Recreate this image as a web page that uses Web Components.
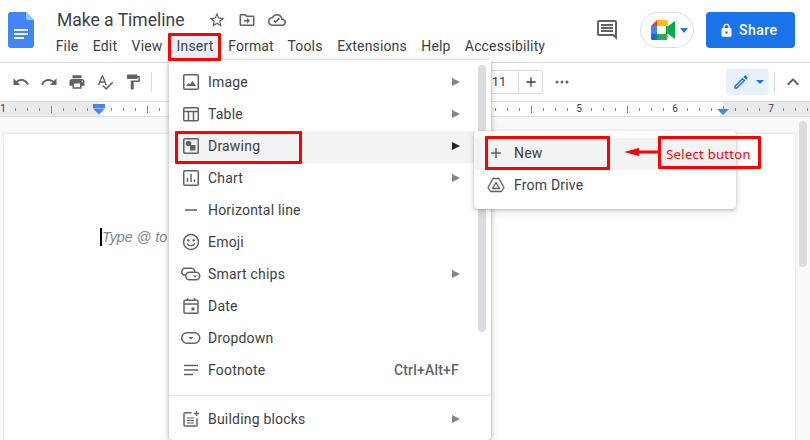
<!DOCTYPE html>
<html>
<head>
<meta charset="utf-8">
<title>Make a Timeline</title>
<style>
    html, body { margin: 0; height: 100%; overflow: hidden; background: #f8f9fa; }
    body {
        position: relative;
        width: 810px;
        height: 440px;
        display: flex;
        flex-direction: column;
        font-family: Roboto, "Liberation Sans", sans-serif;
        color: #3c4043;
    }
</style>
</head>
<body>
    <doc-header></doc-header>
    <doc-toolbar></doc-toolbar>
    <doc-ruler></doc-ruler>
    <doc-canvas></doc-canvas>

    <insert-menu></insert-menu>
    <drawing-submenu></drawing-submenu>

    <red-box style="left:168px;top:33px;width:53px;height:28px"></red-box>
    <red-box style="left:175px;top:131px;width:127px;height:33px"></red-box>
    <red-box style="left:485px;top:136px;width:125px;height:34px"></red-box>
    <red-box style="left:658px;top:136px;width:103px;height:33px" label="Select button"></red-box>
    <red-arrow></red-arrow>

<script>
const icon = (d, size = 18, fill = '#5f6368') =>
    `<svg width="${size}" height="${size}" viewBox="0 0 24 24" fill="${fill}"><path d="${d}"/></svg>`

customElements.define(
    'doc-header',
    class extends HTMLElement {
        constructor() {
            super()
            this.attachShadow({ mode: 'open' })
        }

        connectedCallback() {
            const menus = [['File', 36], ['Edit', 40], ['View', 44], ['Insert', 52], ['Format', 60], ['Tools', 48], ['Extensions', 86], ['Help', 42], ['Accessibility', 96]]
            this.shadowRoot.innerHTML = `
                <style>
                    :host {
                        display: flex;
                        height: 62px;
                        flex: none;
                        background: #fff;
                        border-bottom: 1px solid #dadce0;
                    }
                    .logo { margin: 12px 0 0 8px; width: 26px; height: 36px; flex: none; }
                    .titles { margin-left: 16px; flex: 1; }
                    .title-row { display: flex; align-items: center; height: 26px; margin-top: 7px; margin-left: 7px; }
                    .title { font-size: 17.500px; color: #3c4043; width: 151px; white-space: nowrap; }
                    .title-row svg { flex: none; display: block; }
                    .title-icons { display: flex; gap: 12px; align-items: center; }
                    nav { display: flex; height: 28px; margin-left: -1px; }
                    nav span {
                        font-size: 14px;
                        line-height: 26px;
                        letter-spacing: .15px;
                        text-align: center;
                        color: #3c4043;
                        white-space: nowrap;
                    }
                    nav span.on { background: #e8f0fe; }
                    .right { display: flex; align-items: flex-start; padding: 12px 0 0; margin-right: 15px; flex: none; }
                    .comments { margin-top: 6px; margin-right: 21px; display: block; }
                    .meet {
                        box-sizing: border-box;
                        width: 54px; height: 36px;
                        border: 1px solid #dadce0;
                        border-radius: 18px;
                        display: flex;
                        align-items: center;
                        padding-left: 10px;
                        gap: 5px;
                        margin-right: 12px;
                    }
                    .caret { width: 0; height: 0; border: 4px solid transparent; border-top: 5px solid #1a73e8; border-bottom: 0; }
                    .share {
                        box-sizing: border-box;
                        width: 89px; height: 36px;
                        padding-left: 13px;
                        background: #1a73e8;
                        border-radius: 4px;
                        color: #fff;
                        font-size: 14px;
                        font-weight: 500;
                        letter-spacing: .5px;
                        display: flex;
                        align-items: center;
                        gap: 5px;
                    }
                </style>
                <svg class="logo" viewBox="0 0 26 36">
                    <path d="M3 0h15l8 8v25a3 3 0 0 1-3 3H3a3 3 0 0 1-3-3V3a3 3 0 0 1 3-3z" fill="#4285f4"/>
                    <path d="M18 0l8 8h-6a2 2 0 0 1-2-2z" fill="#a1c2fa"/>
                    <path d="M6 17h14v2H6zM6 21h14v2H6zM6 25h10v2H6z" fill="#f1f1f1"/>
                </svg>
                <div class="titles">
                    <div class="title-row">
                        <span class="title">Make a Timeline</span>
                        <span class="title-icons">
                            <svg width="18" height="18" viewBox="0 0 24 24" fill="#5f6368"><path d="M22 9.240l-7.190-.620L12 2 9.190 8.630 2 9.240l5.460 4.730L5.820 21 12 17.270 18.180 21l-1.630-7.030L22 9.240zM12 15.400l-3.760 2.270 1-4.280-3.320-2.880 4.380-.380L12 6.100l1.710 4.040 4.380.380-3.320 2.880 1 4.280L12 15.400z"/></svg>
                            <svg width="18" height="18" viewBox="0 0 24 24" fill="#5f6368"><path d="M20 6h-8l-2-2H4c-1.100 0-2 .9-2 2v12c0 1.100.9 2 2 2h16c1.100 0 2-.9 2-2V8c0-1.100-.9-2-2-2zm0 12H4V6h5.170l2 2H20v10zm-8-1l4-4-4-4v3H8v2h4v3z"/></svg>
                            <svg width="18" height="18" viewBox="0 0 24 24" fill="#5f6368"><path d="M19.350 10.040A7.490 7.490 0 0 0 12 4a7.480 7.480 0 0 0-6.650 4.040A5.994 5.994 0 0 0 0 14c0 3.310 2.690 6 6 6h13c2.760 0 5-2.240 5-5 0-2.640-2.050-4.780-4.650-4.960zM19 18H6c-2.210 0-4-1.790-4-4 0-2.050 1.530-3.760 3.560-3.970l1.070-.110.500-.950A5.470 5.470 0 0 1 12 6c2.620 0 4.880 1.860 5.390 4.430l.3 1.500 1.530.110A2.980 2.980 0 0 1 22 15c0 1.650-1.350 3-3 3zm-9-1.800l-3-3 1.400-1.400 1.600 1.600 4.600-4.600 1.400 1.400-6 6z"/></svg>
                        </span>
                    </div>
                    <nav>${menus.map(([t, w]) => `<span class="${t === 'Insert' ? 'on' : ''}" style="width:${w}px">${t}</span>`).join('')}</nav>
                </div>
                <div class="right">
                    <svg class="comments" width="24" height="24" viewBox="0 0 24 24" fill="#5f6368"><path d="M22 4c0-1.100-.9-2-2-2H4c-1.100 0-2 .9-2 2v12c0 1.100.9 2 2 2h14l4 4V4zm-2 13.170L18.830 16H4V4h16v13.170zM6 12h12v2H6zm0-3h12v2H6zm0-3h12v2H6z"/></svg>
                    <div class="meet">
                        <svg width="24" height="20" viewBox="0 0 24 20">
                            <path d="M0 6l6-6h9v6z" fill="#ea4335"/>
                            <path d="M6 0h9a1.500 1.500 0 0 1 1.500 1.500V6H6z" fill="#fbbc04"/>
                            <path d="M0 6h6v8H0z" fill="#4285f4"/>
                            <path d="M0 14h6v6H1.500A1.500 1.500 0 0 1 0 18.500z" fill="#1967d2"/>
                            <path d="M6 14h10.500v4.500A1.500 1.500 0 0 1 15 20H6z" fill="#34a853"/>
                            <path d="M16.500 6.500L24 1v18l-7.500-5.500z" fill="#00ac47"/>
                            <path d="M15 6h1.500v8H15z" fill="#188038"/>
                        </svg>
                        <span class="caret"></span>
                    </div>
                    <div class="share">
                        <svg width="15" height="15" viewBox="0 0 24 24" fill="#fff"><path d="M18 8h-1V6A5 5 0 0 0 7 6v2H6a2 2 0 0 0-2 2v10c0 1.100.9 2 2 2h12a2 2 0 0 0 2-2V10a2 2 0 0 0-2-2zM9 6a3 3 0 0 1 6 0v2H9V6zm3 11a2 2 0 1 1 0-4 2 2 0 0 1 0 4z"/></svg>
                        <span>Share</span>
                    </div>
                </div>
            `
        }
    }
)

customElements.define(
    'doc-toolbar',
    class extends HTMLElement {
        constructor() {
            super()
            this.attachShadow({ mode: 'open' })
        }

        connectedCallback() {
            const tools = [
                'M12.500 8c-2.650 0-5.050.99-6.900 2.600L2 7v9h9l-3.620-3.620c1.390-1.160 3.160-1.880 5.120-1.880 3.540 0 6.550 2.310 7.600 5.500l2.370-.78C21.080 11.030 17.150 8 12.500 8z',
                'M18.400 10.600C16.550 8.990 14.150 8 11.500 8c-4.650 0-8.580 3.030-9.970 7.220L3.900 16a8.002 8.002 0 0 1 7.600-5.500c1.950 0 3.730.72 5.120 1.880L13 16h9V7l-3.600 3.600z',
                'M19 8H5c-1.660 0-3 1.340-3 3v6h4v4h12v-4h4v-6c0-1.660-1.340-3-3-3zm-3 11H8v-5h8v5zm3-7c-.55 0-1-.45-1-1s.45-1 1-1 1 .45 1 1-.45 1-1 1zm-1-9H6v4h12V3z',
                'M12.450 16h2.090L9.430 3H7.570L2.460 16h2.090l1.120-3h5.640l1.140 3zm-6.020-5L8.500 5.480 10.570 11H6.430zm15.160.59l-8.090 8.090L9.830 16l-1.410 1.410 5.090 5.090L23 13l-1.410-1.410z',
                'M18 4V3c0-.55-.45-1-1-1H5c-.55 0-1 .45-1 1v4c0 .55.45 1 1 1h12c.55 0 1-.45 1-1V6h1v4H9v11c0 .55.45 1 1 1h2c.55 0 1-.45 1-1v-9h8V4h-3z'
            ]
            this.shadowRoot.innerHTML = `
                <style>
                    :host {
                        display: flex;
                        align-items: center;
                        flex: none;
                        background: #fff;
                        border-bottom: 1px solid #dadce0;
                        box-sizing: border-box;
                        height: 39px;
                        position: relative;
                    }
                    .tools { display: flex; gap: 10px; margin-left: 12px; }
                    .tools svg { display: block; width: 18px; height: 18px; }
                    .sep { width: 1px; height: 20px; background: #dadce0; margin-left: 9px; }
                    .size {
                        position: absolute;
                        left: 480px; top: 7px;
                        width: 63px; height: 24px;
                        box-sizing: border-box;
                        border: 1px solid #dadce0;
                        border-left: 0;
                        border-radius: 0 2px 2px 0;
                        display: flex;
                        font-size: 13px;
                        color: #3c4043;
                    }
                    .size b { flex: none; width: 38px; line-height: 22px; text-align: center; font-weight: 400; }
                    .size i {
                        flex: 1;
                        border-left: 1px solid #dadce0;
                        display: flex; align-items: center; justify-content: center;
                    }
                    .more { position: absolute; left: 555px; top: 12px; display: block; }
                    .mode {
                        position: absolute;
                        left: 726px; top: 6px;
                        width: 43px; height: 26px;
                        background: #e8f0fe;
                        border-radius: 4px;
                        display: flex; align-items: center;
                        padding-left: 6px;
                        box-sizing: border-box;
                        gap: 6px;
                    }
                    .caret { width: 0; height: 0; border: 4px solid transparent; border-top: 4px solid #1a73e8; border-bottom: 0; }
                    .sep2 { position: absolute; left: 774px; top: 9px; width: 1px; height: 20px; background: #dadce0; }
                    .up { position: absolute; left: 781px; top: 7px; display: block; }
                </style>
                <div class="tools">${tools.map(d => icon(d)).join('')}</div>
                <div class="sep"></div>
                <div class="size">
                    <b>11</b>
                    <i>${icon('M19 13h-6v6h-2v-6H5v-2h6V5h2v6h6v2z', 16, '#3c4043')}</i>
                </div>
                <svg class="more" width="14" height="14" viewBox="0 0 14 14" fill="#5f6368"><circle cx="2" cy="7" r="1.500"/><circle cx="7" cy="7" r="1.500"/><circle cx="12" cy="7" r="1.500"/></svg>
                <div class="mode">
                    ${icon('M3 17.250V21h3.750L17.810 9.940l-3.750-3.750L3 17.250zM5.920 19H5v-.920l9.060-9.060.92.920L5.920 19zM20.710 7.040a1 1 0 0 0 0-1.410l-2.340-2.340a1 1 0 0 0-1.410 0l-1.830 1.830 3.750 3.750 1.830-1.830z', 18, '#1a73e8')}
                    <span class="caret"></span>
                </div>
                <div class="sep2"></div>
                <svg class="up" width="24" height="24" viewBox="0 0 24 24" fill="#5f6368"><path d="M12 8l-6 6 1.410 1.410L12 10.830l4.590 4.580L18 14z"/></svg>
            `
        }
    }
)

customElements.define(
    'doc-ruler',
    class extends HTMLElement {
        constructor() {
            super()
            this.attachShadow({ mode: 'open' })
        }

        connectedCallback() {
            // inch = 96px, "1" sits at x 3 and the page margins at 99 and 723
            let ticks = ''
            for (let x = 3; x < 810; x += 12) {
                const k = Math.round((x - 3) / 12) % 8
                if (k === 0) continue
                const h = k === 4 ? 7 : 3
                const y = k === 4 ? 4 : 6
                ticks += `<rect x="${x}" y="${y}" width="1" height="${h}"/>`
            }
            this.shadowRoot.innerHTML = `
                <style>
                    :host { display: block; height: 14px; flex: none; background: #fff; border-bottom: 1px solid #dadce0; position: relative; }
                    svg { display: block; position: absolute; left: 0; top: 0; }
                    span {
                        position: absolute; top: 0;
                        font-size: 10px; line-height: 14px;
                        width: 12px; margin-left: -6px; text-align: center;
                        color: #3c4043;
                    }
                </style>
                <svg width="810" height="14">
                    <rect width="99" height="14" fill="#e8eaed"/>
                    <rect x="723" width="87" height="14" fill="#e8eaed"/>
                    <g fill="#80868b">${ticks}</g>
                    <rect x="93" y="2" width="12" height="4" fill="#4285f4"/>
                    <path d="M93 6.500h12l-6 6z" fill="#4285f4"/>
                    <path d="M717 7h12l-6 6z" fill="#4285f4"/>
                </svg>
                <span style="left:3px">1</span>
                <span style="left:579px">5</span>
                <span style="left:675px">6</span>
                <span style="left:771px">7</span>
            `
        }
    }
)

customElements.define(
    'doc-canvas',
    class extends HTMLElement {
        constructor() {
            super()
            this.attachShadow({ mode: 'open' })
        }

        connectedCallback() {
            this.shadowRoot.innerHTML = `
                <style>
                    :host { display: block; flex: 1; background: #f8f9fa; position: relative; overflow: hidden; padding: 17px 15px 0 4px; }
                    .page {
                        background: #fff;
                        height: 400px;
                        box-shadow: 0 0 3px rgba(60,64,67,.18);
                        padding: 94px 0 0 96px;
                        box-sizing: border-box;
                        font-family: "Liberation Sans", Arial, sans-serif;
                        font-size: 14.300px;
                        line-height: 18px;
                        font-style: italic;
                        color: #80868b;
                        white-space: nowrap;
                    }
                    .caret { display: inline-block; width: 2px; height: 18px; background: #000; vertical-align: top; }
                    .thumb { position: absolute; right: 3px; top: 4px; width: 8px; height: 146px; background: #dadce0; border-radius: 4px; }
                </style>
                <div class="page"><span class="caret"></span>Type @ to insert</div>
                <div class="thumb"></div>
            `
        }
    }
)

customElements.define(
    'menu-row',
    class extends HTMLElement {
        constructor() {
            super()
            this.attachShadow({ mode: 'open' })
        }

        connectedCallback() {
            this.shadowRoot.innerHTML = `
                <style>
                    :host {
                        display: flex;
                        align-items: center;
                        box-sizing: border-box;
                        height: 32px;
                        padding: 0 0 2px 13px;
                        font-size: 14px;
                        letter-spacing: .2px;
                        color: #3c4043;
                    }
                    :host([active]) { background: #f1f3f4; }
                    .ic { width: 18px; height: 18px; flex: none; margin-right: ${this.getAttribute('gap') || '8px'}; }
                    .lab { flex: 1; white-space: nowrap; }
                    .key { font-weight: 500; color: #5f6368; margin-right: 32px; }
                    .tri { width: 0; height: 0; margin-right: 31px; border: 4px solid transparent; border-left: 8px solid #80868b; border-right: 0; }
                    :host([active]) .tri { border-left-color: #202124; }
                </style>
                <span class="ic"><slot name="icon"></slot></span>
                <span class="lab"><slot></slot></span>
                ${this.hasAttribute('key') ? `<span class="key">${this.getAttribute('key')}</span>` : ''}
                ${this.hasAttribute('arrow') ? '<span class="tri"></span>' : ''}
            `
        }
    }
)

customElements.define(
    'insert-menu',
    class extends HTMLElement {
        constructor() {
            super()
            this.attachShadow({ mode: 'open' })
        }

        connectedCallback() {
            const s = inner => `<svg slot="icon" width="18" height="18" viewBox="0 0 18 18" fill="none" stroke="#5f6368" stroke-width="1.500" style="display:block;overflow:visible">${inner}</svg>`
            const rows = [
                ['Image', s('<rect x="1.750" y="1.750" width="14.500" height="14.500" rx="1"/><path d="M4 13l2.500-3 1.500 1.500L10.500 8 14 13z" fill="#5f6368" stroke="none"/>'), 'arrow'],
                ['Table', s('<rect x="1.750" y="2.750" width="14.500" height="13" rx="1"/><path d="M2 6.500h14M6.500 6.500v9M11.500 6.500v9"/>'), 'arrow'],
                ['Drawing', s('<rect x="1.750" y="1.750" width="14.500" height="14.500" rx="1"/><circle cx="6.500" cy="6.500" r="2.800" fill="#5f6368" stroke="none"/><rect x="8" y="8" width="5.500" height="5.500" fill="#5f6368" stroke="none"/>'), 'arrow active'],
                ['Chart', s('<rect x="1.750" y="1.750" width="14.500" height="14.500" rx="1"/><path d="M5.500 13V9M9 13V5M12.500 13v-2.500"/>'), 'arrow'],
                ['Horizontal line', s('<path d="M3 9h12" stroke="#80868b" stroke-width="2"/>'), 'plain'],
                ['Emoji', s('<circle cx="9" cy="9" r="7.500"/><circle cx="6.300" cy="7.300" r="1.200" fill="#5f6368" stroke="none"/><circle cx="11.700" cy="7.300" r="1.200" fill="#5f6368" stroke="none"/><path d="M5.500 11c1 2.200 6 2.200 7 0" stroke-linecap="round"/>'), 'plain'],
                ['Smart chips', s('<rect x="-.250" y="3.250" width="13" height="7" rx="3.500"/><rect x="3.750" y="7.250" width="14" height="7.500" rx="3.700" fill="#fff"/><path d="M11 10.500h4l-2 2z" fill="#5f6368" stroke="none"/>'), 'arrow'],
                ['Date', s('<rect x="2" y="3.250" width="14" height="13" rx="1"/><path d="M2 7h14M5.500 1v3M12.500 1v3"/><rect x="9.500" y="10.500" width="3" height="3" fill="#5f6368" stroke="none"/>'), 'plain'],
                ['Dropdown', s('<rect x="-.250" y="3.750" width="18" height="10.500" rx="5.200"/><path d="M6.500 8h5L9 10.500z" fill="#5f6368" stroke="none"/>'), 'plain'],
                ['Footnote', s('<path d="M2 4.500h14M2 9h14M2 13.500h9"/>'), 'key']
            ]
            const row = ([label, svg, flags]) => {
                let attrs = ''
                if (flags.includes('arrow')) attrs += ' arrow'
                if (flags.includes('active')) attrs += ' active'
                if (flags === 'key') attrs += ' key="Ctrl+Alt+F"'
                return `<menu-row${attrs}>${svg}${label}</menu-row>`
            }
            this.shadowRoot.innerHTML = `
                <style>
                    :host {
                        position: absolute;
                        left: 169px; top: 60px;
                        width: 322px; height: 380px;
                        box-sizing: border-box;
                        background: #fff;
                        border-radius: 0 0 4px 4px;
                        box-shadow: 0 1px 4px rgba(60,64,67,.35), 0 2px 8px rgba(60,64,67,.15);
                        padding-top: 7px;
                        overflow: hidden;
                    }
                    hr { border: 0; height: 1px; background: #e0e0e0; margin: 8px 0; }
                    .thumb { position: absolute; right: 5px; top: 5px; width: 8px; height: 267px; background: #dadce0; border-radius: 4px; }
                </style>
                ${rows.map(row).join('')}
                <hr>
                ${row(['Building blocks', s('<path d="M9.500 2.750H3a1 1 0 0 0-1 1V15a1 1 0 0 0 1 1h11a1 1 0 0 0 1-1V8.500"/><path d="M5 8h7M5 10.500h7M5 13h7" stroke-width="1.200"/><path d="M14.500 1v5M12 3.500h5" stroke-width="1.300"/>'), 'arrow'])}
                <div class="thumb"></div>
            `
        }
    }
)

customElements.define(
    'drawing-submenu',
    class extends HTMLElement {
        constructor() {
            super()
            this.attachShadow({ mode: 'open' })
        }

        connectedCallback() {
            this.shadowRoot.innerHTML = `
                <style>
                    :host {
                        position: absolute;
                        left: 474px; top: 131px;
                        width: 262px; height: 78px;
                        box-sizing: border-box;
                        padding-top: 7px;
                        background: #fff;
                        border-radius: 4px;
                        box-shadow: 0 1px 3px rgba(60,64,67,.3), 0 3px 8px rgba(60,64,67,.15);
                    }
                </style>
                <menu-row active gap="9px">
                    <svg slot="icon" width="18" height="18" viewBox="0 0 18 18" fill="#5f6368" style="display:block"><path d="M8.250 4h1.500v4.250H14v1.500H9.750V14h-1.500V9.750H4v-1.500h4.250z"/></svg>
                    New
                </menu-row>
                <menu-row gap="9px">
                    <svg slot="icon" width="18" height="18" viewBox="0 0 18 18" fill="none" stroke="#5f6368" stroke-width="1.300" stroke-linejoin="round" style="display:block"><path d="M6 2.500h6l5 9-2.500 4h-11L1 11.500z"/><path d="M9 6.500l3.500 6h-7z"/></svg>
                    From Drive
                </menu-row>
            `
        }
    }
)

customElements.define(
    'red-box',
    class extends HTMLElement {
        constructor() {
            super()
            this.attachShadow({ mode: 'open' })
        }

        connectedCallback() {
            const label = this.getAttribute('label') || ''
            this.shadowRoot.innerHTML = `
                <style>
                    :host {
                        position: absolute;
                        box-sizing: border-box;
                        border: 3px solid #f00;
                        border-radius: 1px;
                        display: flex;
                        align-items: center;
                        justify-content: center;
                        font-family: "Noto Sans", "Liberation Sans", sans-serif;
                        font-size: 13px;
                        color: #f00;
                        white-space: nowrap;
                    }
                    span { margin: 3px 2px 0 0; letter-spacing: .3px; }
                </style>
                <span>${label}</span>
            `
        }
    }
)

customElements.define(
    'red-arrow',
    class extends HTMLElement {
        constructor() {
            super()
            this.attachShadow({ mode: 'open' })
        }

        connectedCallback() {
            this.shadowRoot.innerHTML = `
                <style>
                    :host { position: absolute; left: 624px; top: 148px; display: block; width: 35px; height: 8px; }
                    svg { display: block; }
                </style>
                <svg width="35" height="8" viewBox="0 0 35 8">
                    <path d="M0 4L15 0v2.500h20v3H15V8z" fill="#f00"/>
                </svg>
            `
        }
    }
)
</script>
</body>
</html>
